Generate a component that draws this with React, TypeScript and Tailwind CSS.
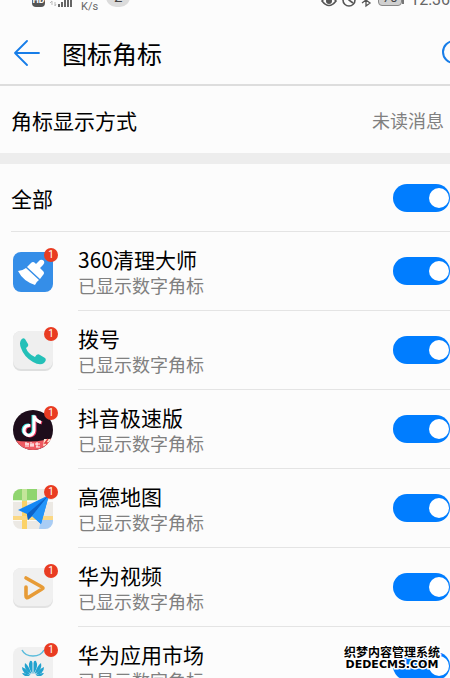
import { ReactNode, useState } from "react";
import clsx from "clsx";

type AppItem = {
    id : string,
    name : string,
    icon : ReactNode,
}

function CleanerIcon() {
    return (
        <svg viewBox="0 0 40 40" className="w-10 h-10" aria-hidden="true">
            <rect width="40" height="40" rx="8" fill="#358ee8"/>
            <path d="M5 19 Q9 19 13 16 L26 28 Q23 30 22 33 Q10 29 5 19 Z" fill="#fff"/>
            <path d="M14 15 L18 11 Q20 9 22 11 L23 12 L27 8 Q29 7 31 9 Q32 11 30 13 L27 16 L30 19 Q32 21 30 23 L27 27 Z" fill="#fff"/>
        </svg>
    )
}

function DialIcon() {
    return (
        <svg viewBox="0 0 40 40" className="w-10 h-10" aria-hidden="true">
            <rect width="40" height="40" rx="8" fill="#dedfdf"/>
            <rect width="40" height="38" rx="8" fill="#efefef"/>
            <path d="M8 9 Q10 6 12 8 L15 13 Q16 15 13 17 Q15 23 22 26 Q24 22 27 24 L32 27 Q34 29 31 32 Q27 35 20 31 Q11 26 8 17 Q6 12 8 9 Z" fill="#24c0b8"/>
        </svg>
    )
}

function DouyinIcon() {
    return (
        <svg viewBox="0 0 40 40" className="w-10 h-10" aria-hidden="true">
            <defs>
                <clipPath id="douyin-round"><circle cx="20" cy="20" r="20"/></clipPath>
            </defs>
            <g clipPath="url(#douyin-round)">
                <rect width="40" height="40" fill="#1d0d1b"/>
                <g fill="none" strokeWidth="3">
                    <path d="M16 15 A5 5 0 1 0 20 20 V5 Q21 10 27 12" stroke="#35e5e3"/>
                    <path d="M18 16 A5 5 0 1 0 22 21 V6 Q23 11 29 13" stroke="#f23c68"/>
                    <path d="M17 15.5 A5 5 0 1 0 21 20.5 V5.5 Q22 10.5 28 12.5" stroke="#fff"/>
                </g>
                <path d="M0 30 Q16 33 32 30 L40 28 V40 H0 Z" fill="#ee5a62"/>
                <path d="M31 29 H40 V34 L30 36 Z" fill="#fbe3cf"/>
                <path d="M35 29 L32 33 H35 L33 36" stroke="#e23a3e" strokeWidth="1.5" fill="none"/>
                <path d="M13 32 V37 M12 34 H16 M15 33 V37 M18 32 V37 M17 35 H21 M20 33 V37 M24 32 V37 M22 34 H27 M23 37 H27" stroke="#fff" strokeWidth="1"/>
            </g>
        </svg>
    )
}

function MapIcon() {
    return (
        <svg viewBox="0 0 40 40" className="w-10 h-10" aria-hidden="true">
            <defs>
                <clipPath id="map-round"><rect width="40" height="40" rx="8"/></clipPath>
            </defs>
            <g clipPath="url(#map-round)">
                <rect width="40" height="40" fill="#ece9e4"/>
                <path d="M0 0 H24 V12 H0 Z" fill="#8fd56f"/>
                <path d="M28 30 H40 V40 H26 Z" fill="#a9cdf5"/>
                <path d="M0 12 H40 M0 31 H28" stroke="#fff" strokeWidth="1.5"/>
                <path d="M9 12 H14 V40 H9 Z" fill="#fbd268"/>
                <path d="M0 27 H40 V31 H0 Z" fill="#fbd884"/>
                <path d="M9 0 H14 V12 H9 Z" fill="#c4e59a"/>
            </g>
            <path d="M36 6 L5 21 L14 25 L15 31 L19 27 L28 35 Z" fill="#1287f5"/>
            <path d="M36 6 L14 25 L15 31 L19 27 Z" fill="#0b62c8"/>
            <path d="M36 6 L19 27 L28 35 Z" fill="#2395fa"/>
        </svg>
    )
}

function VideoIcon() {
    return (
        <svg viewBox="0 0 40 40" className="w-10 h-10" aria-hidden="true">
            <rect width="40" height="40" rx="8" fill="#e2e2e2"/>
            <rect width="40" height="38" rx="8" fill="#f0f0f0"/>
            <path d="M13 19 V28 Q13 31 16 29 L29 21 Q31 20 29 19 L13 10" fill="none" stroke="#e79b36" strokeWidth="3.6" strokeLinecap="round" strokeLinejoin="round"/>
        </svg>
    )
}

function MarketIcon() {
    return (
        <svg viewBox="0 0 40 40" className="w-10 h-10" aria-hidden="true">
            <rect width="40" height="40" rx="8" fill="#f0f0f0"/>
            <path d="M9 3 Q12 9 20 9 Q28 9 31 3" fill="none" stroke="#5bbcdc" strokeWidth="1.5"/>
            <g fill="#22a2cf">
                <path d="M19.5 27 Q14 19 17 14 Q19 13 19.5 16 Z"/>
                <path d="M20.5 27 Q26 19 23 14 Q21 13 20.5 16 Z"/>
                <path d="M18.5 27 Q10 23 12 16 Q16 19 18.5 27 Z"/>
                <path d="M21.5 27 Q30 23 28 16 Q24 19 21.5 27 Z"/>
                <path d="M17.5 28 Q9 27 9 20 Q14 22 17.5 28 Z"/>
                <path d="M22.5 28 Q31 27 31 20 Q26 22 22.5 28 Z"/>
                <path d="M17 29 H12 Q10 28 9 26 Q14 26 17 29 Z"/>
                <path d="M23 29 H28 Q30 28 31 26 Q26 26 23 29 Z"/>
            </g>
            <text x="20" y="36" textAnchor="middle" fontSize="6" fontFamily="Liberation Sans, sans-serif" fill="#3aa9d0">HUAWEI</text>
        </svg>
    )
}

const appList : AppItem[] = [
    { id : "cleaner", name : "360清理大师", icon : <CleanerIcon/> },
    { id : "dial", name : "拨号", icon : <DialIcon/> },
    { id : "douyin", name : "抖音极速版", icon : <DouyinIcon/> },
    { id : "map", name : "高德地图", icon : <MapIcon/> },
    { id : "video", name : "华为视频", icon : <VideoIcon/> },
    { id : "market", name : "华为应用市场", icon : <MarketIcon/> },
];

function Switch({id, checked, onChange} : {id : string, checked : boolean, onChange : (checked : boolean) => void}) {
    return (
        <input
            id={id}
            type="checkbox"
            role="switch"
            checked={checked}
            onChange={(e) => onChange(e.target.checked)}
            className={clsx("flex items-center shrink-0 appearance-none w-[57px] h-7 px-px rounded-full cursor-pointer",
                            "bg-gray-300 checked:bg-[#007dff] checked:justify-end",
                            "before:block before:w-5 before:h-5 before:rounded-full before:bg-white")}
        />
    )
}

function StatusBar() {
    return (
        <div className="flex items-end justify-between h-3 pl-8 text-[#666666] font-[Roboto,sans-serif]">
            <div className="flex items-end">
                <span className="flex items-end justify-center w-[13px] h-3 mb-[5px] rounded-sm bg-[#555555] text-white text-[9px] leading-[13px] font-bold">HD</span>
                <svg viewBox="0 0 24 14" className="w-6 h-[14px] mb-[5px] ml-1" aria-hidden="true">
                    <path d="M3 8 V12 M1 10 L3 8 M6 9 V13 L7 11" stroke="#bbbbbb" fill="none"/>
                    <path d="M10 11 V14 M13 9 V14 M16 7 V14 M19 4 V14 M22 1 V14" stroke="#555555" strokeWidth="1.8"/>
                </svg>
                <span className="ml-2 text-[11px] leading-[10px]">K/s</span>
                <span className="flex items-center justify-center w-6 h-5 mb-[5px] ml-2 rounded-full bg-[#dcdcdc] text-[#444444] text-[15px] leading-4">2</span>
            </div>
            <div className="flex items-end h-7">
                <svg viewBox="0 0 56 16" className="w-14 h-4 mb-1 mr-0.5" aria-hidden="true">
                    <g fill="none" stroke="#555555" strokeWidth="1.6">
                        <path d="M2 9 Q9 0 16 9 Q9 18 2 9 Z"/>
                        <circle cx="29" cy="8" r="6"/>
                        <path d="M29 4 V8 L33 11" />
                        <path d="M42 5 L50 11 L46 14 V2 L50 5 L42 11" strokeWidth="1.3"/>
                    </g>
                    <circle cx="9" cy="9" r="3" fill="#555555"/>
                </svg>
                <span className="flex items-end justify-center w-6 h-4 mb-[6px] rounded-sm border border-[#888888] bg-[#d0d0d0] text-[#444444] text-[13px] leading-[15px]">70</span>
                <span className="w-0.5 h-2 mb-2 bg-[#777777]"></span>
                <span className="ml-[6px] mb-1 text-base leading-4">12:36</span>
            </div>
        </div>
    )
}

function Header() {
    return (
        <header className="flex items-center h-[74px] pt-[10px] pl-[14px] border-b-2 border-[#dddddd]">
            <button type="button" aria-label="返回">
                <svg viewBox="0 0 26 26" className="w-[26px] h-[26px]" fill="none" stroke="#177de8" strokeWidth="1.8" strokeLinecap="round" strokeLinejoin="round">
                    <path d="M25 13 H1 M13 1 L1 13 L13 25"/>
                </svg>
            </button>
            <h1 className="grow pl-[22px] text-[25px] leading-8">图标角标</h1>
            <button type="button" aria-label="搜索" className="w-2 overflow-hidden">
                <svg viewBox="0 0 26 26" className="w-[26px] h-[26px] max-w-none" fill="none" stroke="#177de8" strokeWidth="2">
                    <circle cx="12" cy="12" r="11"/>
                    <path d="M20 20 L25 25"/>
                </svg>
            </button>
        </header>
    )
}

export default function App() {
    const [enabled, setEnabled] = useState<Record<string, boolean>>(
        () => Object.fromEntries(appList.map((item) => [item.id, true]))
    );

    const allEnabled = appList.every((item) => enabled[item.id]);

    const handleAllChange = (checked : boolean) => {
        setEnabled(Object.fromEntries(appList.map((item) => [item.id, checked])))
    }

    return (
        <div className="relative h-screen overflow-hidden bg-[#fcfcfc] text-black font-['Noto_Sans_CJK_SC',sans-serif]">
            <StatusBar/>
            <Header/>
            <main>
                <button type="button" className="flex items-center justify-between w-full h-[67px] pl-[11px] pr-[6px]">
                    <span className="text-[21px] leading-7">角标显示方式</span>
                    <span className="text-lg leading-7 text-[#808080]">未读消息</span>
                </button>
                <div className="h-[11px] bg-[#ededed]"></div>
                <div className="pl-[11px]">
                    <div className="flex items-center justify-between h-[68px] border-b border-[#e4e4e4]">
                        <label htmlFor="all" className="text-[21px] leading-7">全部</label>
                        <Switch id="all" checked={allEnabled} onChange={handleAllChange}/>
                    </div>
                    <ul>
                        {appList.map((item) => (
                            <li key={item.id} className="flex items-center h-[79px] pl-0.5">
                                <div className="relative shrink-0">
                                    {item.icon}
                                    <span className="absolute -top-1 -right-[5px] flex items-center justify-center w-[14px] h-[14px] rounded-full bg-[#e93c22] text-white text-[10px] leading-[14px] font-[Roboto,sans-serif]">1</span>
                                </div>
                                <div className="flex grow items-center justify-between h-full ml-[25px] border-b border-[#e4e4e4]">
                                    <label htmlFor={item.id} className="flex flex-col pt-0.5">
                                        <span className="text-[21px] leading-[26px]">{item.name}</span>
                                        <span className="text-lg leading-[26px] text-[#808080]">已显示数字角标</span>
                                    </label>
                                    <Switch
                                        id={item.id}
                                        checked={enabled[item.id]}
                                        onChange={(checked) => setEnabled({...enabled, [item.id] : checked})}
                                    />
                                </div>
                            </li>
                        ))}
                    </ul>
                </div>
            </main>
            <div className={clsx("absolute right-[10px] bottom-[7px] flex flex-col items-center font-bold text-black",
                                 "[-webkit-text-stroke:3px_white] [paint-order:stroke]")}>
                <span className="text-xs leading-[14px]">织梦内容管理系统</span>
                <span className="text-[11px] leading-3 font-['DejaVu_Sans',sans-serif]">DEDECMS.COM</span>
            </div>
        </div>
    );
}
